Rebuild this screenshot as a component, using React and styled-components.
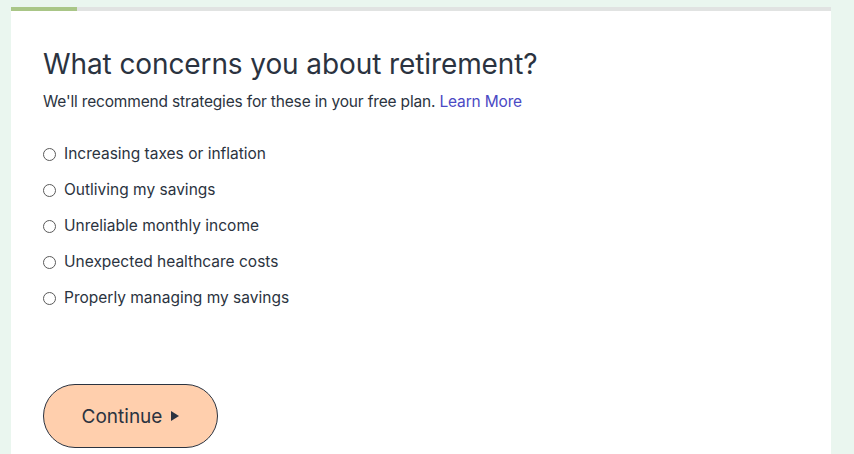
import React from 'react';
import styled, { createGlobalStyle } from 'styled-components';

const options = [
    'Increasing taxes or inflation',
    'Outliving my savings',
    'Unreliable monthly income',
    'Unexpected healthcare costs',
    'Properly managing my savings',
];

export default function App() {
    return (
        <>
            <Global/>
            <Page>
                <Card>
                    <Progress>
                        <Fill style={{ width: '8%' }}/>
                    </Progress>
                    <Body>
                        <Title>What concerns you about retirement?</Title>
                        <Sub>
                            We'll recommend strategies for these in your free plan. <Link href="#">Learn More</Link>
                        </Sub>
                        <List>
                            {options.map((o) => (
                                <Option key={o}>
                                    <Radio type="radio" name="concern"/>
                                    <span>{o}</span>
                                </Option>
                            ))}
                        </List>
                        <Continue type="button">
                            Continue
                            <Arrow viewBox="0 0 8 10">
                                <path d="M0 0 L8 5 L0 10 Z" fill="currentColor"/>
                            </Arrow>
                        </Continue>
                    </Body>
                </Card>
            </Page>
        </>
    );
}

const Global = createGlobalStyle`
    body {
        margin: 0;
        background: #eaf6ef;
        font-family: Inter, "Noto Sans", sans-serif;
        color: #2b3340;
    }
`

const Page = styled.div`
    padding: 7px 23px 0 11px;
    height: 454px;
    box-sizing: border-box;
    overflow: hidden;
`

const Card = styled.div`
    background: #fff;
    height: 100%;
`

const Progress = styled.div`
    height: 4px;
    background: #e1e3e2;
`

const Fill = styled.div`
    height: 100%;
    background: #a9c687;
`

const Body = styled.div`
    padding: 34px 32px 0;
`

const Title = styled.h1`
    margin: 0;
    font-size: 28px;
    font-weight: 400;
    line-height: 38px;
    letter-spacing: -0.1px;
`

const Sub = styled.p`
    margin: 8px 0 0;
    font-size: 15.5px;
    line-height: 22px;
    letter-spacing: -0.17px;
`

const Link = styled.a`
    color: #4b49c4;
    text-decoration: none;
`

const List = styled.div`
    display: flex;
    flex-direction: column;
    gap: 14px;
    margin-top: 30px;
`

const Option = styled.label`
    display: flex;
    align-items: center;
    gap: 8px;
    font-size: 15.5px;
    line-height: 22px;
    cursor: pointer;
`

const Radio = styled.input`
    appearance: none;
    margin: 0;
    width: 13px;
    height: 13px;
    border: 1px solid #5a5a5a;
    border-radius: 50%;
    background: #fff;
`

const Continue = styled.button`
    margin-top: 75px;
    width: 175px;
    height: 64px;
    border: 1px solid #2b3340;
    border-radius: 32px;
    background: #ffcfad;
    color: #2b3340;
    font-family: Inter, "Noto Sans", sans-serif;
    font-size: 19px;
    display: flex;
    align-items: center;
    justify-content: center;
    gap: 9px;
    cursor: pointer;
`

const Arrow = styled.svg`
    width: 8px;
    height: 10px;
`
